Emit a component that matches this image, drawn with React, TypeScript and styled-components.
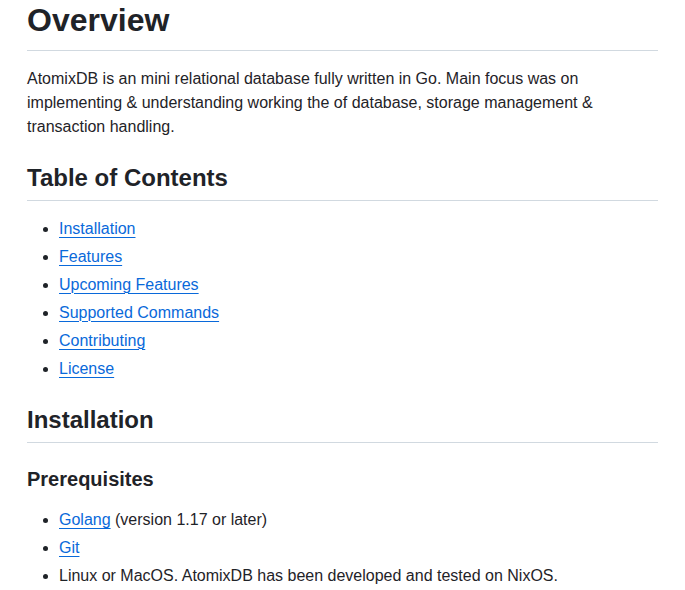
import styled, { createGlobalStyle } from 'styled-components';

const Global = createGlobalStyle`
  html, body { margin: 0; padding: 0; background: #ffffff; }
  body {
    font-family: "Liberation Sans", Arial, sans-serif;
    font-size: 16px;
    line-height: 1.5;
    color: #1f2328;
  }
`;

const Article = styled.article`
  padding: 0 27px;
  max-width: 631px;
`;

const H1 = styled.h1`
  margin: 0 0 16px;
  font-size: 32px;
  font-weight: 600;
  line-height: 1.25;
  padding-bottom: 0.3em;
  border-bottom: 1px solid #d1d9e0;
`;

const H2 = styled.h2`
  margin: 24px 0 16px;
  font-size: 24px;
  font-weight: 600;
  line-height: 1.25;
  padding-bottom: 0.3em;
  border-bottom: 1px solid #d1d9e0;
`;

const H3 = styled.h3`
  margin: 24px 0 16px;
  font-size: 20px;
  font-weight: 600;
  line-height: 1.25;
`;

const P = styled.p`
  margin: 0 0 16px;
`;

const List = styled.ul`
  margin: 0 0 16px;
  padding-left: 2em;
`;

const Item = styled.li`
  & + & { margin-top: 0.25em; }
`;

const Link = styled.a`
  color: #0969da;
  text-decoration: underline;
  text-underline-offset: 0.2rem;
  text-decoration-thickness: 1px;
`;

const toc = ['Installation', 'Features', 'Upcoming Features', 'Supported Commands', 'Contributing', 'License'];

export default function App() {
  return (
    <>
      <Global />
      <Article>
        <H1>Overview</H1>
        <P>
          AtomixDB is an mini relational database fully written in Go. Main focus was on
          implementing &amp; understanding working the of database, storage management &amp;
          transaction handling.
        </P>
        <H2>Table of Contents</H2>
        <List>
          {toc.map((t) => (
            <Item key={t}>
              <Link href="#">{t}</Link>
            </Item>
          ))}
        </List>
        <H2>Installation</H2>
        <H3>Prerequisites</H3>
        <List>
          <Item>
            <Link href="#">Golang</Link> (version 1.17 or later)
          </Item>
          <Item>
            <Link href="#">Git</Link>
          </Item>
          <Item>Linux or MacOS. AtomixDB has been developed and tested on NixOS.</Item>
        </List>
      </Article>
    </>
  );
}
